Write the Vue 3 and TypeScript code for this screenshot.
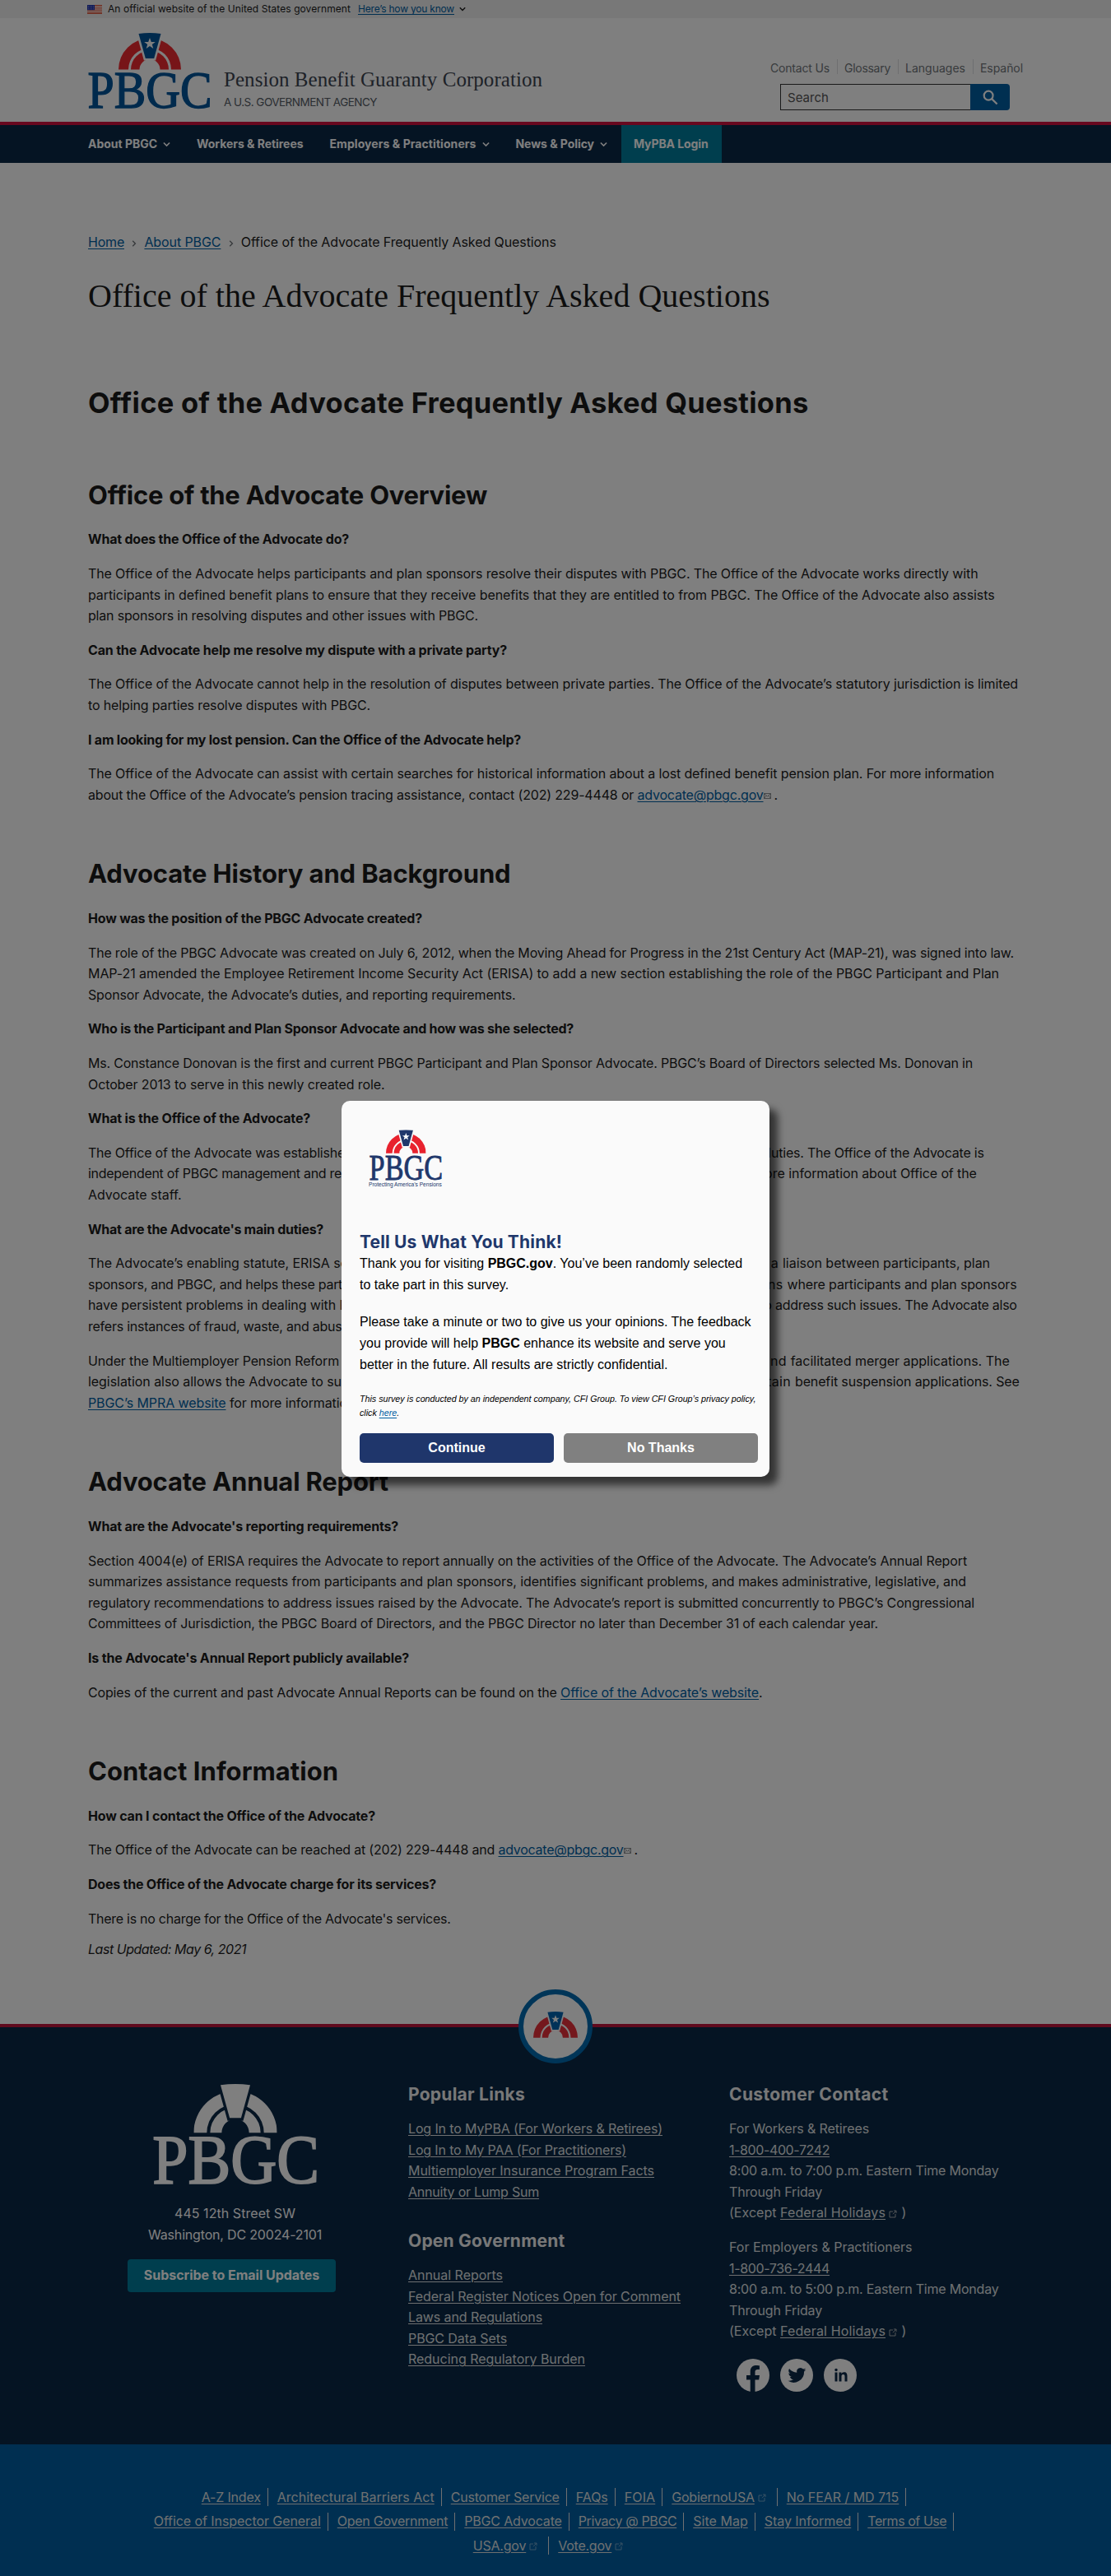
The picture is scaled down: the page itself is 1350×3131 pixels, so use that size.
<script setup lang="ts">
interface Seg {
  t: string
  w: number
  link?: boolean
  icon?: 'mail' | 'ext'
}
interface Block {
  kind: 'h' | 'q' | 'p'
  lines: Seg[][]
}

// Tracks a run of text so that it fills the given width in pixels.
const vFit = {
  mounted(el: HTMLElement, binding: { value: number }) {
    const count = (el.textContent ?? '').length
    if (!binding.value || !count) return
    const natural = el.getBoundingClientRect().width
    el.style.letterSpacing = `${((binding.value - natural) / count).toFixed(4)}px`
  },
}

const s = (t: string, w = 0): Seg => ({ t, w })
const a = (t: string, w: number, icon?: 'mail' | 'ext'): Seg => ({ t, w, link: true, icon })
const h = (t: string, w: number): Block => ({ kind: 'h', lines: [[s(t, w)]] })
const q = (t: string, w: number): Block => ({ kind: 'q', lines: [[s(t, w)]] })
const p = (...lines: Seg[][]): Block => ({ kind: 'p', lines })

const blocks: Block[] = [
  h('Office of the Advocate Overview', 485),
  q('What does the Office of the Advocate do?', 317),
  p(
    [s('The Office of the Advocate helps participants and plan sponsors resolve their disputes with PBGC. The Office of the Advocate works directly with', 1081.5)],
    [s('participants in defined benefit plans to ensure that they receive benefits that they are entitled to from PBGC. The Office of the Advocate also assists', 1101.5)],
    [s('plan sponsors in resolving disputes and other issues with PBGC.', 474)],
  ),
  q('Can the Advocate help me resolve my dispute with a private party?', 509),
  p(
    [s('The Office of the Advocate cannot help in the resolution of disputes between private parties. The Office of the Advocate’s statutory jurisdiction is limited', 1130)],
    [s('to helping parties resolve disputes with PBGC.', 343)],
  ),
  q('I am looking for my lost pension. Can the Office of the Advocate help?', 526),
  p(
    [s('The Office of the Advocate can assist with certain searches for historical information about a lost defined benefit pension plan. For more information', 1101)],
    [s('about the Office of the Advocate’s pension tracing assistance, contact (202) 229-4448 or ', 667.5), a('advocate@pbgc.gov', 153, 'mail'), s(' .')],
  ),
  h('Advocate History and Background', 513.5),
  q('How was the position of the PBGC Advocate created?', 406),
  p(
    [s('The role of the PBGC Advocate was created on July 6, 2012, when the Moving Ahead for Progress in the 21st Century Act (MAP-21), was signed into law.', 1125)],
    [s('MAP-21 amended the Employee Retirement Income Security Act (ERISA) to add a new section establishing the role of the PBGC Participant and Plan', 1107)],
    [s('Sponsor Advocate, the Advocate’s duties, and reporting requirements.', 519.5)],
  ),
  q('Who is the Participant and Plan Sponsor Advocate and how was she selected?', 590),
  p(
    [s('Ms. Constance Donovan is the first and current PBGC Participant and Plan Sponsor Advocate. PBGC’s Board of Directors selected Ms. Donovan in', 1075)],
    [s('October 2013 to serve in this newly created role.', 360.5)],
  ),
  q('What is the Office of the Advocate?', 270),
  p(
    [s('The Office of the Advocate was establish', 303), s('ed by MAP-21 to advocate for participants and carry out its official d', 527), s('uties. The Office of the Advocate is', 258.7)],
    [s('independent of PBGC management and re', 308), s('ports directly to the PBGC Board of Directors. See the website for more ', 543.3), s('information about Office of the', 228.4)],
    [s('Advocate staff.', 113.5)],
  ),
  q("What are the Advocate's main duties?", 286),
  p(
    [s('The Advocate’s enabling statute, ERISA s', 306.5), s('ection 4004, establishes that the Advocate shall serve and act as a ', 537.5), s('liaison between participants, plan', 252)],
    [s('sponsors, and PBGC, and helps these par', 304), s('ties resolve their disputes. The Advocate also identifies the patterns ', 545.5), s('where participants and plan sponsors', 279)],
    [s('have persistent problems in dealing with ', 305.5), s('PBGC, and recommends legislative or regulatory changes necessary to ', 529.5), s('address such issues. The Advocate also', 293.6)],
    [s('refers instances of fraud, waste, and abus', 308.5), s('e to the Inspector General.')],
  ),
  p(
    [s('Under the Multiemployer Pension Reform', 305), s(' Act of 2014 (MPRA), the Advocate has a role in certain partitions and ', 548.7), s('facilitated merger applications. The', 266)],
    [s('legislation also allows the Advocate to su', 308), s('bmit comments and select a retiree representative to assist in certain ', 551), s('benefit suspension applications. See', 272.7)],
    [a('PBGC’s MPRA website', 167.5), s(' for more informati', 138), s('on.')],
  ),
  h('Advocate Annual Report', 365),
  q("What are the Advocate's reporting requirements?", 377),
  p(
    [s('Section 4004(e) of ERISA requires the Advocate to report annually on the activities of the Office of the Advocate. The Advocate’s Annual Report', 1068)],
    [s('summarizes assistance requests from participants and plan sponsors, identifies significant problems, and makes administrative, legislative, and', 1067)],
    [s('regulatory recommendations to address issues raised by the Advocate. The Advocate’s report is submitted concurrently to PBGC’s Congressional', 1077)],
    [s('Committees of Jurisdiction, the PBGC Board of Directors, and the PBGC Director no later than December 31 of each calendar year.', 960)],
  ),
  q("Is the Advocate's Annual Report publicly available?", 390),
  p([s('Copies of the current and past Advocate Annual Reports can be found on the ', 574), a('Office of the Advocate’s website', 241), s('.')]),
  h('Contact Information', 304),
  q('How can I contact the Office of the Advocate?', 349),
  p([s('The Office of the Advocate can be reached at (202) 229-4448 and ', 498.5), a('advocate@pbgc.gov', 152, 'mail'), s(' .')]),
  q('Does the Office of the Advocate charge for its services?', 423),
  p([s("There is no charge for the Office of the Advocate's services.", 440.5)]),
]

const nav = [
  { t: 'About PBGC', w: 84, menu: true },
  { t: 'Workers & Retirees', w: 129.5, menu: false },
  { t: 'Employers & Practitioners', w: 178, menu: true },
  { t: 'News & Policy', w: 95.5, menu: true },
]

const utility = [
  { t: 'Contact Us', w: 72 },
  { t: 'Glossary', w: 56 },
  { t: 'Languages', w: 73 },
  { t: 'Español', w: 52 },
]

const popular = [
  a('Log In to MyPBA (For Workers & Retirees)', 309),
  a('Log In to My PAA (For Practitioners)', 265),
  a('Multiemployer Insurance Program Facts', 299),
  a('Annuity or Lump Sum', 159),
]
const openGov = [
  a('Annual Reports', 115),
  a('Federal Register Notices Open for Comment', 331),
  a('Laws and Regulations', 163),
  a('PBGC Data Sets', 120),
  a('Reducing Regulatory Burden', 215),
]
const contacts = [
  { who: s('For Workers & Retirees', 170), phone: s('1-800-400-7242', 122), hours: s('8:00 a.m. to 7:00 p.m. Eastern Time Monday', 327.5) },
  { who: s('For Employers & Practitioners', 222.5), phone: s('1-800-736-2444', 122), hours: s('8:00 a.m. to 5:00 p.m. Eastern Time Monday', 327.5) },
]
const legal: Seg[][] = [
  [a('A-Z Index', 72), a('Architectural Barriers Act', 191), a('Customer Service', 132), a('FAQs', 39), a('FOIA', 37.5), a('GobiernoUSA', 100.5, 'ext'), a('No FEAR / MD 715', 136.5)],
  [a('Office of Inspector General', 203), a('Open Government', 134.5), a('PBGC Advocate', 118.5), a('Privacy @ PBGC', 119.5), a('Site Map', 66.5), a('Stay Informed', 105.5), a('Terms of Use', 96)],
  [a('USA.gov', 64.5, 'ext'), a('Vote.gov', 65, 'ext')],
]
</script>

<template>
  <div class="page">
    <svg class="defs" width="0" height="0" aria-hidden="true">
      <symbol id="arch" viewBox="0 0 76 45">
        <path class="ring" d="M0 44.5A38 38 0 0 1 76 44.5H64A26 26 0 0 0 12 44.5Z" />
        <path class="ring" d="M15 44.5A23 23 0 0 1 61 44.5H50.5A12.5 12.5 0 0 0 25.500 44.500Z" />
        <path class="gap" d="M24.500 1Q38-1 51.500 1L43.200 31H32.800Z" />
        <path class="key" d="M24.500 1Q38-1 51.500 1L43.200 31H32.800Z" />
        <path class="star" d="M38 6l1.800 5h5l-4 3.100 1.500 5L38 16l-4.300 3.100 1.500-5-4-3.100h5z" />
      </symbol>
      <symbol id="chev" viewBox="0 0 8 6"><path d="M.8 1.200L4 4.400l3.200-3.200" fill="none" stroke="currentColor" stroke-width="1.400" /></symbol>
      <symbol id="ext" viewBox="0 0 10 10"><path d="M5 2H1v7h7V5M6 1h3v3M9 1L5 5.200" fill="none" stroke="currentColor" stroke-width="1" /></symbol>
      <symbol id="mail" viewBox="0 0 9 7"><path d="M.5.5h8v6h-8zM.5.5l4 3.500 4-3.500M.5 6.500L3.200 3M8.500 6.500L5.800 3" fill="none" stroke="currentColor" stroke-width=".8" /></symbol>
    </svg>

    <div class="banner">
      <svg class="flag" viewBox="0 0 18 11">
        <path fill="#fff" d="M0 0h18v11H0z" />
        <path stroke="#db3e1f" stroke-width="1" d="M0 .5h18M0 2.700h18M0 4.900h18M0 7h18M0 9.200h18M0 10.700h18" />
        <path fill="#1e33b1" d="M0 0h9v6.200H0z" />
        <path stroke="#a0a8e0" stroke-width=".8" stroke-dasharray="1 1" d="M1 1.500h8M1 3.200h8M1 4.900h8" />
      </svg>
      <span v-fit="295" class="official">An official website of the United States government</span>
      <a v-fit="117" class="link how">Here’s how you know</a>
      <svg class="how-chev"><use href="#chev" /></svg>
    </div>

    <header class="header">
      <div class="brand">
        <svg class="logo" viewBox="0 0 150 93">
          <use href="#arch" x="37" y="0" width="76" height="45" />
          <text x="-.5" y="91" textLength="151" lengthAdjust="spacingAndGlyphs">PBGC</text>
        </svg>
        <div class="names">
          <div><span v-fit="387" class="name">Pension Benefit Guaranty Corporation</span></div>
          <div><span v-fit="186" class="agency">A U.S. GOVERNMENT AGENCY</span></div>
        </div>
      </div>
      <div class="tools">
        <div class="utility">
          <span v-for="u in utility" :key="u.t" class="util"><span v-fit="u.w">{{ u.t }}</span></span>
        </div>
        <div class="search">
          <div class="field"><span v-fit="50">Search</span></div>
          <div class="go">
            <svg viewBox="0 0 20 20"><circle cx="7.500" cy="7.500" r="5.700" /><path d="M11.700 11.700L18.500 18.500" /></svg>
          </div>
        </div>
      </div>
    </header>

    <nav class="nav">
      <div v-for="n in nav" :key="n.t" class="item">
        <span v-fit="n.w">{{ n.t }}</span>
        <svg v-if="n.menu"><use href="#chev" /></svg>
      </div>
      <div class="login"><span v-fit="90.500">MyPBA Login</span></div>
    </nav>

    <main class="main">
      <div class="crumbs">
        <a v-fit="44" class="link">Home</a><svg><use href="#chev" /></svg>
        <a v-fit="93" class="link">About PBGC</a><svg><use href="#chev" /></svg>
        <span v-fit="383">Office of the Advocate Frequently Asked Questions</span>
      </div>
      <h1><span v-fit="828.500">Office of the Advocate Frequently Asked Questions</span></h1>
      <h2><span v-fit="875.500">Office of the Advocate Frequently Asked Questions</span></h2>
      <div class="faq">
        <component :is="b.kind === 'h' ? 'h3' : 'div'" v-for="(b, i) in blocks" :key="i" :class="b.kind">
          <div v-for="(line, j) in b.lines" :key="j" class="line">
            <template v-for="(seg, k) in line" :key="k">
              <span v-fit="seg.w" :class="{ link: seg.link }">{{ seg.t }}</span>
              <svg v-if="seg.icon" class="mail"><use href="#mail" /></svg>
            </template>
          </div>
        </component>
      </div>
      <div class="updated"><span v-fit="192">Last Updated: May 6, 2021</span></div>
    </main>

    <footer class="footer">
      <div class="medal"><svg viewBox="0 0 76 45"><use href="#arch" width="76" height="45" /></svg></div>
      <div class="col office">
        <svg class="logo" viewBox="0 0 150 93">
          <use href="#arch" x="37" y="0" width="76" height="45" />
          <text x="-.5" y="91" textLength="152" lengthAdjust="spacingAndGlyphs">PBGC</text>
        </svg>
        <span v-fit="147">445 12th Street SW</span>
        <span v-fit="211">Washington, DC 20024-2101</span>
        <div class="subscribe"><span v-fit="213.500">Subscribe to Email Updates</span></div>
      </div>
      <div class="col">
        <h4><span v-fit="142">Popular Links</span></h4>
        <div v-for="l in popular" :key="l.t" class="line"><a v-fit="l.w" class="link">{{ l.t }}</a></div>
        <h4 class="second"><span v-fit="190.500">Open Government</span></h4>
        <div v-for="l in openGov" :key="l.t" class="line"><a v-fit="l.w" class="link">{{ l.t }}</a></div>
      </div>
      <div class="col">
        <h4><span v-fit="193.500">Customer Contact</span></h4>
        <div v-for="c in contacts" :key="c.who.t" class="contact">
          <div class="line"><span v-fit="c.who.w">{{ c.who.t }}</span></div>
          <div class="line"><a v-fit="c.phone.w" class="link">{{ c.phone.t }}</a></div>
          <div class="line"><span v-fit="c.hours.w">{{ c.hours.t }}</span></div>
          <div class="line"><span v-fit="113">Through Friday</span></div>
          <div class="line"><span v-fit="62">{{ '(Except ' }}</span><a v-fit="128" class="link">Federal Holidays</a><svg class="ext"><use href="#ext" /></svg><span>)</span></div>
        </div>
        <div class="social">
          <svg viewBox="0 0 40 40">
            <circle cx="20" cy="20" r="20" />
            <path d="M16.700 40V25.500H12v-5.600h4.700v-4.300c0-5 2.800-7.600 7.200-7.600 2 0 4 .3 4 .3v4.800h-2.400c-2.300 0-3 1.400-3 2.900v3.900H28l-.8 5.600h-4.700V40z" />
          </svg>
          <svg viewBox="0 0 40 40">
            <circle cx="20" cy="20" r="20" />
            <path transform="translate(9.500 9) scale(.91)" d="M24 4.600c-.9.400-1.800.7-2.800.8 1-.6 1.800-1.600 2.200-2.700-1 .6-2 1-3.100 1.200a4.900 4.900 0 0 0-8.400 4.500C7.700 8.200 4.100 6.300 1.700 3.200a4.900 4.900 0 0 0 1.500 6.600c-.8 0-1.600-.2-2.200-.6a4.900 4.900 0 0 0 3.900 4.900c-.7.200-1.500.2-2.200.1a4.900 4.900 0 0 0 4.600 3.400A9.900 9.900 0 0 1 0 19.500 14 14 0 0 0 21.500 7.100c1-.7 1.800-1.600 2.500-2.500z" />
          </svg>
          <svg viewBox="0 0 40 40">
            <circle cx="20" cy="20" r="20" />
            <path d="M13.500 16.500h3V27.500h-3zM15 11.700a1.750 1.750 0 1 1 0 3.500 1.750 1.750 0 0 1 0-3.500zM18.500 16.500h2.900v1.500c.5-.9 1.600-1.800 3.200-1.800 3.300 0 3.900 2.100 3.900 5v6.300h-3v-5.600c0-1.300 0-3-1.900-3s-2.100 1.400-2.100 2.900v5.700h-3z" />
          </svg>
        </div>
      </div>
    </footer>

    <div class="legal">
      <div v-for="(row, i) in legal" :key="i" class="row">
        <div v-for="l in row" :key="l.t" class="entry">
          <a v-fit="l.w" class="link">{{ l.t }}</a>
          <svg v-if="l.icon" class="ext"><use href="#ext" /></svg>
        </div>
      </div>
    </div>

    <div class="overlay">
      <div class="modal">
        <svg class="modal-logo" viewBox="0 0 150 116">
          <use href="#arch" x="35" y="0" width="81" height="48" />
          <text class="big" x="1" y="101" textLength="149" lengthAdjust="spacingAndGlyphs">PBGC</text>
          <text class="tag" x="0" y="115" textLength="148" lengthAdjust="spacingAndGlyphs">Protecting America’s Pensions</text>
        </svg>
        <div class="ask"><span v-fit="246">Tell Us What You Think!</span></div>
        <p>Thank you for visiting <b>PBGC.gov</b>. You’ve been randomly selected<br />to take part in this survey.</p>
        <p>Please take a minute or two to give us your opinions. The feedback<br />you provide will help <b>PBGC</b> enhance its website and serve you<br />better in the future. All results are strictly confidential.</p>
        <div class="fine">This survey is conducted by an independent company, CFI Group. To view CFI Group’s privacy policy,<br />click <a class="link">here</a>.</div>
        <div class="buttons"><div class="yes">Continue</div><div class="no">No Thanks</div></div>
      </div>
    </div>
  </div>
</template>

<style>
body {
  margin: 0;
}
</style>

<style scoped>
.page {
  --red: #ee2a30;
  --blue: #00559a;
  --bg: #fff;
  --star: #fff;
  position: relative;
  width: 1350px;
  height: 3131px;
  overflow: hidden;
  background: #fff;
  color: #1b1b1b;
  font: 16px/25.6px Inter, "Open Sans", sans-serif;
}
.page span,
.page a {
  white-space: pre;
}
.defs {
  position: absolute;
}
.ring { fill: var(--red); }
.gap { fill: none; stroke: var(--bg); stroke-width: 5; }
.key { fill: var(--blue); }
.star { fill: var(--star); }
.link {
  color: #005ea2;
  text-decoration: underline;
  text-underline-offset: 2px;
  text-decoration-thickness: 1px;
}
svg {
  flex: none;
}
.banner {
  display: flex;
  align-items: center;
  height: 22px;
  padding-left: 106px;
  background: #f0f0f0;
  font-size: 12px;
  line-height: 20px;
}
.flag { width: 18px; height: 11px; margin-right: 7px; }
.how { margin-left: 9px; }
.how-chev { width: 8px; height: 6px; margin-left: 6px; color: #1b1b1b; }
.header {
  display: flex;
  justify-content: space-between;
  height: 126px;
  padding: 0 107px;
  border-bottom: 4px solid #d0103f;
}
.brand { display: flex; }
.logo { overflow: visible; }
.logo text {
  font: 63px "Liberation Serif", serif;
  fill: var(--blue);
  stroke: var(--blue);
  stroke-width: 1.400;
}
.header .logo { width: 150px; height: 93px; margin-top: 18px; }
.names { padding-top: 60px; margin-left: 15px; }
.name { font: 25px/30px "Liberation Serif", serif; color: #3d4551; }
.agency { font-size: 13.500px; line-height: 20px; color: #565c65; }
.names > div { height: 29px; }
.names > div:first-child { line-height: 30px; }
.tools { padding-top: 49px; }
.utility { display: flex; justify-content: flex-end; font-size: 14px; line-height: 20px; color: #71767a; }
.util { height: 18px; margin-top: 1px; line-height: 22px; }
.util + .util { margin-left: 8.500px; padding-left: 8.500px; border-left: 1px solid #dcdee0; }
.search { display: flex; justify-content: flex-end; margin: 12px 16px 0 0; height: 32px; }
.field {
  box-sizing: border-box;
  width: 231px;
  padding-left: 8px;
  border: 1px solid #333;
  border-right: 0;
  font-size: 15px;
  line-height: 32px;
  color: #555;
}
.go {
  display: flex;
  align-items: center;
  justify-content: center;
  width: 48px;
  border-radius: 0 4px 4px 0;
  background: #005ea2;
}
.go svg { width: 19px; height: 19px; fill: none; stroke: #fff; stroke-width: 2.300; }
.nav {
  display: flex;
  height: 46px;
  padding-left: 107px;
  background: #0b2847;
  color: #fff;
  font-size: 14px;
  font-weight: 700;
  line-height: 46px;
}
.item { display: flex; align-items: center; margin-right: 32px; }
.item svg { width: 9px; height: 7px; margin-left: 7px; }
.item:nth-child(4) { margin-right: 16.500px; }
.login { padding: 0 16px 0 15.500px; background: #007c9c; }
.main {
  box-sizing: border-box;
  height: 2262px;
  padding: 84px 107px 0;
}
.crumbs { display: flex; align-items: center; }
.crumbs svg { width: 8px; height: 6px; margin: 2px 8.200px 0; transform: rotate(-90deg); color: #71767a; }
h1, h2, h3, h4 { margin: 0; white-space: nowrap; }
h1 { margin-top: 30.500px; font: 40px/44px "Liberation Serif", serif; }
h2 { margin-top: 86.500px; font-size: 34.500px; font-weight: 700; line-height: 42px; }
.h { margin: 64.900px 0 23.800px; font-size: 31px; font-weight: 700; line-height: 36px; }
.h:first-child { margin-top: 73px; }
.line { display: flex; }
.line > span, .line > a { flex: none; }
.q { font-weight: 700; }
.p { margin: 16px 0; }
.p:last-child { margin-bottom: 0; }
.mail { width: 9px; height: 7px; margin: 10px -1px 0 .5px; color: #71767a; }
.updated { margin-top: 11.500px; font-style: italic; }
.footer {
  --red: #fff;
  --blue: #fff;
  --bg: #0b2847;
  position: relative;
  display: flex;
  gap: 32px;
  box-sizing: border-box;
  height: 511px;
  padding: 69px 0 0 107px;
  border-top: 4px solid #c0143c;
  background: #0b2847;
  color: #fff;
}
.footer .logo { width: 200px; height: 124px; margin-bottom: 21px; }
.footer .logo .star, .office { --star: transparent; }
.footer .link, .legal .link { color: inherit; }
.medal {
  --red: #e8303a;
  --blue: #0064b0;
  --bg: #fff;
  --star: #fff;
  position: absolute;
  top: -46px;
  left: 630px;
  display: flex;
  align-items: center;
  justify-content: center;
  box-sizing: border-box;
  width: 90px;
  height: 90px;
  border: 6px solid #006bb0;
  border-radius: 50%;
  background: #fff;
}
.medal svg { width: 54px; height: 32px; margin-top: -4px; }
.col { width: 358px; }
.office { display: flex; flex-direction: column; align-items: center; width: 357px; }
.subscribe {
  width: 253px;
  height: 40px;
  margin: 17px 8px 0 0;
  border-radius: 4px;
  background: #007c9c;
  font-weight: 700;
  line-height: 39px;
  text-align: center;
}
.col:not(.office) { color: #dfe1e2; }
h4 { margin-bottom: 16px; font-size: 21px; line-height: 26px; color: #f0f0f0; }
.second { margin-top: 33.700px; }
.contact { margin-bottom: 16px; }
.ext { width: 10px; height: 10px; margin: 9px 6px 0 3.500px; color: #a9aeb1; }
.social { display: flex; gap: 13px; margin: 20px 0 0 8.500px; }
.social svg { width: 40px; height: 40px; }
.social circle { fill: #fff; }
.social path { fill: #0b2847; }
.legal {
  box-sizing: border-box;
  height: 160px;
  padding: 49.500px 4px 0 0;
  background: #005ea2;
  color: #dfe1e2;
  line-height: 29.600px;
}
.row { display: flex; justify-content: center; }
.entry { display: flex; align-items: center; height: 29.600px; }
.entry::after { content: ""; width: 1px; height: 22px; margin-left: 8px; background: #dfe1e2; }
.entry + .entry { margin-left: 11px; }
.entry .ext { margin: 2px 5px 0 4px; color: #73a5cc; }
.row:last-child .entry:last-child::after { visibility: hidden; }
.overlay {
  position: absolute;
  inset: 0;
  display: flex;
  align-items: center;
  justify-content: center;
  padding-top: 2px;
  background: rgba(0, 0, 0, .5);
}
.modal {
  --red: #e8222e;
  --blue: #20376b;
  --bg: #fafafa;
  box-sizing: border-box;
  width: 520px;
  height: 457px;
  padding: 35px 14px 0 22px;
  border-radius: 10px;
  background: #fafafa;
  box-shadow: 10px 10px 10px rgba(0, 0, 0, .6);
  color: #000;
  font-family: "Liberation Sans", sans-serif;
}
.modal-logo { display: block; width: 90px; height: 70px; margin-left: 11px; overflow: visible; }
.big { font: 73px "Liberation Serif", serif; fill: var(--blue); stroke: var(--blue); stroke-width: 1.500; }
.tag { font: 11px "Liberation Sans", sans-serif; fill: var(--blue); }
.ask { margin-top: 54px; font: 700 21px/26px Inter, sans-serif; color: #20376b; }
.modal p { margin: 0 0 20.200px; white-space: nowrap; }
.fine { margin-top: 21px; font-size: 10.700px; font-style: italic; line-height: 17px; white-space: nowrap; }
.buttons { display: flex; gap: 12px; margin-top: 16px; }
.buttons > div { width: 236px; height: 36px; border-radius: 5px; font-weight: 700; line-height: 35px; text-align: center; color: #fff; }
.yes { background: #1f366b; }
.no { background: #808080; }
</style>
